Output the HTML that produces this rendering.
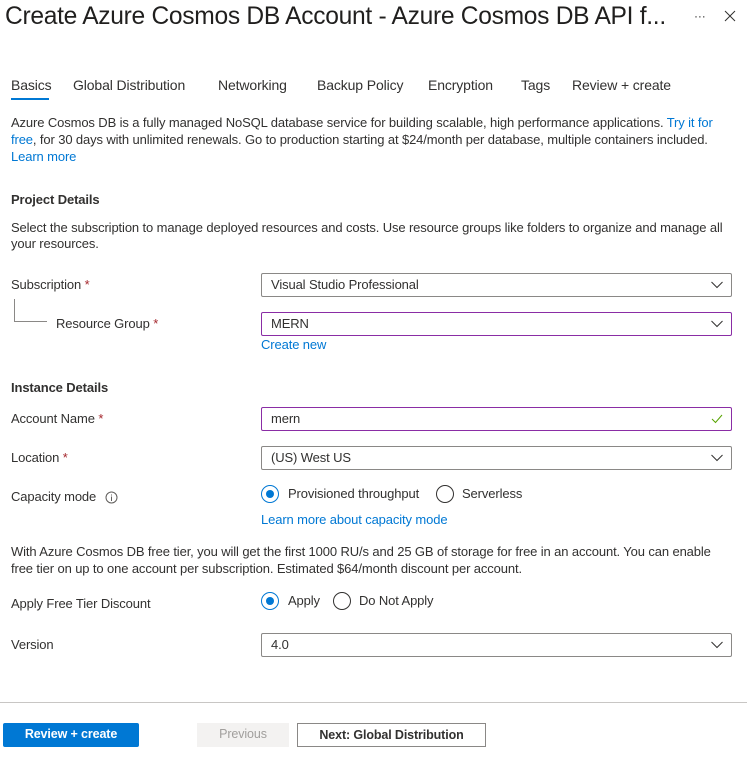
<!DOCTYPE html>
<html><head><meta charset="utf-8"><style>
*{margin:0;padding:0;box-sizing:border-box}
body{width:747px;height:765px;background:#fff;font-family:"Liberation Sans",sans-serif;font-size:13px;color:#323130;position:relative;overflow:hidden;letter-spacing:-0.12px}
.a{position:absolute;white-space:nowrap;line-height:16px}
.l{color:#0078d4}
.r{color:#a4262c}
.b{font-weight:bold}
.box{position:absolute;left:261px;width:471px;height:24px;border:1px solid #8a8886;border-radius:2px;padding-left:9px;line-height:22px}
.p{border-color:#8a2da5}
.chev{position:absolute;right:8px;top:7px}
.rad{position:absolute;width:18px;height:18px;border:1px solid #323130;border-radius:50%}
.rad.on{border-color:#0078d4}
.rad.on::after{content:"";position:absolute;left:4px;top:4px;width:8px;height:8px;border-radius:50%;background:#0078d4}
.btn{position:absolute;top:723px;height:24px;line-height:22px;text-align:center;font-weight:bold;font-size:12.5px}
.t{font-size:14px;top:77px}
</style></head><body>
<div class="a" style="left:5px;top:2px;font-size:24.6px;line-height:30px;color:#201f1e;letter-spacing:-0.3px">Create Azure Cosmos DB Account - Azure Cosmos DB API f...</div>
<div class="a" style="left:694px;top:8px;font-size:12px">···</div>
<svg style="position:absolute;left:724px;top:10px" width="12" height="12"><path d="M1 1L11 11M11 1L1 11" stroke="#323130" stroke-width="1"/></svg>

<div class="a t" style="left:11px">Basics</div>
<div style="position:absolute;left:11px;top:98px;width:38px;height:2px;background:#0078d4"></div>
<div class="a t" style="left:73px">Global Distribution</div>
<div class="a t" style="left:218px">Networking</div>
<div class="a t" style="left:317px">Backup Policy</div>
<div class="a t" style="left:428px">Encryption</div>
<div class="a t" style="left:521px">Tags</div>
<div class="a t" style="left:572px">Review + create</div>

<div class="a" style="left:11px;top:115px">Azure Cosmos DB is a fully managed NoSQL database service for building scalable, high performance applications. <span class="l">Try it for</span></div>
<div class="a" style="left:11px;top:132px"><span class="l">free</span>, for 30 days with unlimited renewals. Go to production starting at $24/month per database, multiple containers included.</div>
<div class="a l" style="left:11px;top:149px">Learn more</div>

<div class="a b" style="left:11px;top:192px;font-size:13px">Project Details</div>
<div class="a" style="left:11px;top:220px">Select the subscription to manage deployed resources and costs. Use resource groups like folders to organize and manage all</div>
<div class="a" style="left:11px;top:236px">your resources.</div>

<div class="a" style="left:11px;top:277px">Subscription <span class="r">*</span></div>
<div class="box" style="top:273px">Visual Studio Professional<svg class="chev" width="12" height="8"><path d="M0.5 1L6 6.5L11.5 1" stroke="#323130" fill="none"/></svg></div>
<div style="position:absolute;left:14px;top:299px;width:1px;height:22px;background:#8a8886"></div>
<div style="position:absolute;left:14px;top:321px;width:33px;height:1px;background:#8a8886"></div>
<div class="a" style="left:56px;top:316px">Resource Group <span class="r">*</span></div>
<div class="box p" style="top:312px">MERN<svg class="chev" width="12" height="8"><path d="M0.5 1L6 6.5L11.5 1" stroke="#323130" fill="none"/></svg></div>
<div class="a l" style="left:261px;top:337px">Create new</div>

<div class="a b" style="left:11px;top:380px;font-size:13px">Instance Details</div>
<div class="a" style="left:11px;top:411px">Account Name <span class="r">*</span></div>
<div class="box p" style="top:407px">mern<svg class="chev" style="top:6px" width="12" height="10"><path d="M1 5L4.5 8.5L11 1" stroke="#57a300" fill="none"/></svg></div>
<div class="a" style="left:11px;top:450px">Location <span class="r">*</span></div>
<div class="box" style="top:446px">(US) West US<svg class="chev" width="12" height="8"><path d="M0.5 1L6 6.5L11.5 1" stroke="#323130" fill="none"/></svg></div>
<div class="a" style="left:11px;top:489px">Capacity mode</div>
<svg style="position:absolute;left:105px;top:491px" width="13" height="13"><circle cx="6.5" cy="6.5" r="5.5" stroke="#605e5c" fill="none"/><path d="M6.5 5.5V10M6.5 3.5V4.5" stroke="#605e5c"/></svg>
<div class="rad on" style="left:261px;top:485px"></div>
<div class="a" style="left:288px;top:486px">Provisioned throughput</div>
<div class="rad" style="left:436px;top:485px"></div>
<div class="a" style="left:462px;top:486px">Serverless</div>
<div class="a l" style="left:261px;top:512px">Learn more about capacity mode</div>

<div class="a" style="left:11px;top:544px">With Azure Cosmos DB free tier, you will get the first 1000 RU/s and 25 GB of storage for free in an account. You can enable</div>
<div class="a" style="left:11px;top:561px">free tier on up to one account per subscription. Estimated $64/month discount per account.</div>
<div class="a" style="left:11px;top:596px">Apply Free Tier Discount</div>
<div class="rad on" style="left:261px;top:592px"></div>
<div class="a" style="left:288px;top:593px">Apply</div>
<div class="rad" style="left:333px;top:592px"></div>
<div class="a" style="left:359px;top:593px">Do Not Apply</div>
<div class="a" style="left:11px;top:637px">Version</div>
<div class="box" style="top:633px">4.0<svg class="chev" width="12" height="8"><path d="M0.5 1L6 6.5L11.5 1" stroke="#323130" fill="none"/></svg></div>

<div style="position:absolute;left:0;top:702px;width:747px;height:1px;background:#c8c6c4"></div>
<div class="btn" style="left:3px;width:136px;background:#0078d4;color:#fff;border-radius:2px">Review + create</div>
<div class="btn" style="left:197px;width:92px;background:#f3f2f1;color:#a19f9d;font-weight:normal">Previous</div>
<div class="btn" style="left:297px;width:189px;border:1px solid #8a8886;color:#323130">Next: Global Distribution</div>
</body></html>
